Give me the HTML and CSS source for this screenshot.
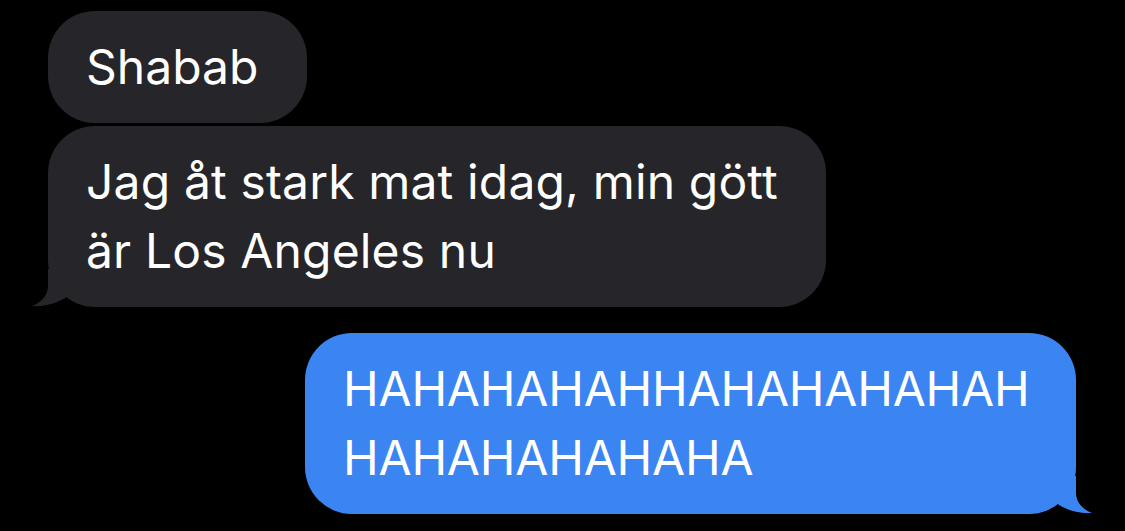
FILE: index.html
```html
<!DOCTYPE html>
<html>
<head>
<meta charset="utf-8">
<link rel="stylesheet" href="styles.css">
</head>
<body>
<div class="thread">
  <div class="bubble in first">Shabab</div>
  <div class="bubble in tailed">Jag åt stark mat idag, min gött<br>är Los Angeles nu
    <svg class="tail tail-left" viewBox="0 0 40 40" width="40" height="40"><path d="M16,2 L16,19 C16,29 8,36 0,39 C13,40 26,36 36,29 L36,2 Z" fill="#262529"/></svg>
  </div>
  <div class="bubble out tailed">HAHAHAHAHHAHAHAHAHAH<br>HAHAHAHAHAHA
    <svg class="tail tail-right" viewBox="0 0 40 40" width="40" height="40"><path d="M16,2 L16,19 C16,29 8,36 0,39 C13,40 26,36 36,29 L36,2 Z" fill="#3b85f3"/></svg>
  </div>
</div>
</body>
</html>
```
FILE: styles.css
```css
html, body {
  margin: 0;
  padding: 0;
  background: #000;
}
body {
  width: 1125px;
  height: 531px;
  overflow: hidden;
  font-family: Inter, "Liberation Sans", Arial, sans-serif;
}
.thread {
  display: flex;
  flex-direction: column;
  padding: 11px 49px 0 48px;
}
.bubble {
  position: relative;
  box-sizing: border-box;
  font-size: 48px;
  line-height: 69px;
  color: #fff;
  padding: 21px 38px 22px;
  border-radius: 47px;
  white-space: nowrap;
}
.in {
  align-self: flex-start;
  background: #262529;
}
.first {
  width: 259px;
}
.in.tailed {
  margin-top: 3px;
  width: 778px;
  letter-spacing: 0.15px;
}
.out {
  align-self: flex-end;
  background: #3b85f3;
  margin-top: 26px;
  width: 771px;
  letter-spacing: -0.2px;
}
.tail {
  position: absolute;
  bottom: 0;
}
.tail-left {
  left: -16px;
}
.tail-right {
  right: -16px;
  transform: scaleX(-1);
}
```
